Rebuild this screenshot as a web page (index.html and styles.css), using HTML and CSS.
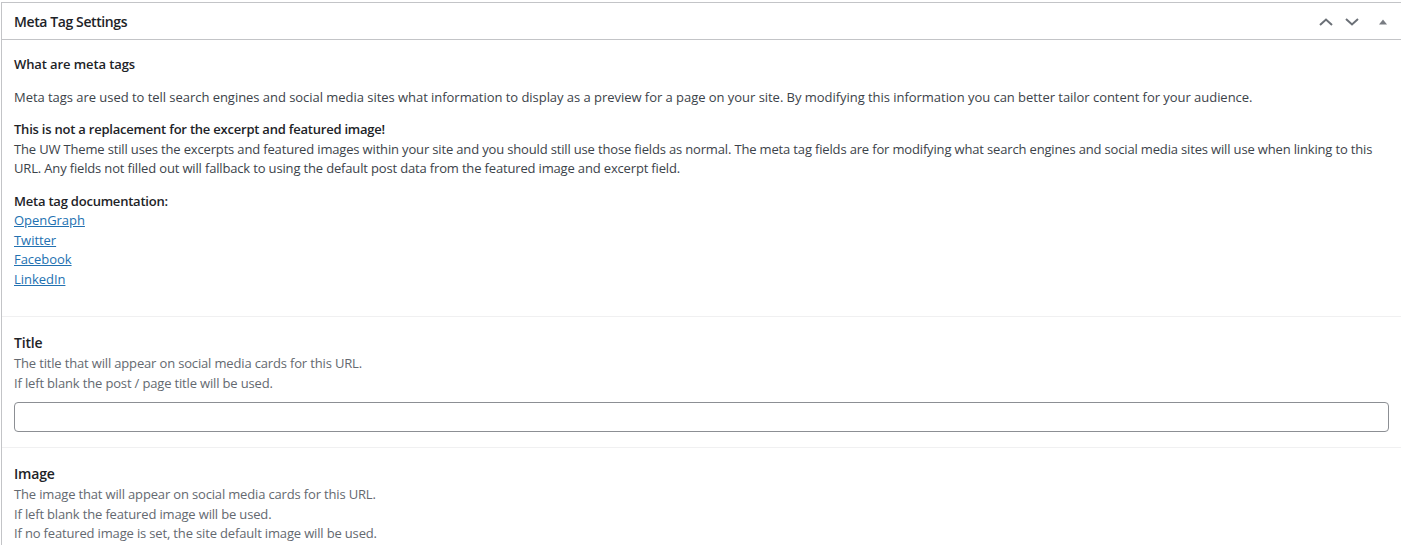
FILE: index.html
```html
<!DOCTYPE html>
<html lang="en">
<head>
    <meta charset="UTF-8">
    <title>Meta Tag Settings</title>
    <link rel="stylesheet" href="styles.css">
</head>
<body>
    <div class="postbox">
        <div class="postbox-header">
            <h2 class="hndle">Meta Tag Settings</h2>
            <div class="handle-actions">
                <button class="handle-btn" aria-label="Move up">
                    <svg width="14" height="10" viewBox="0 0 14 10"><path d="M1 8 L7 2.5 L13 8" fill="none" stroke="#6b7077" stroke-width="2"/></svg>
                </button>
                <button class="handle-btn" aria-label="Move down">
                    <svg width="14" height="10" viewBox="0 0 14 10"><path d="M1 2 L7 7.5 L13 2" fill="none" stroke="#6b7077" stroke-width="2"/></svg>
                </button>
                <button class="handle-btn toggle" aria-label="Toggle panel">
                    <svg width="10" height="8" viewBox="0 0 10 8"><path d="M1 6.5 L5 1.5 L9 6.5 Z" fill="#787c82"/></svg>
                </button>
            </div>
        </div>

        <div class="section">
            <h4>What are meta tags</h4>
            <p>Meta tags are used to tell search engines and social media sites what information to display as a preview for a page on your site. By modifying this information you can better tailor content for your audience.</p>
            <p><span class="strong">This is not a replacement for the excerpt and featured image!</span><br>
            <span class="note">The UW Theme still uses the excerpts and featured images within your site and you should still use those fields as normal. The meta tag fields are for modifying what search engines and social media sites will use when linking to this URL. Any fields not filled out will fallback to using the default post data from the featured image and excerpt field.</span></p>
            <p><span class="strong">Meta tag documentation:</span><br>
            <a href="#">OpenGraph</a><br>
            <a href="#">Twitter</a><br>
            <a href="#">Facebook</a><br>
            <a href="#">LinkedIn</a></p>
        </div>

        <div class="section field">
            <label class="field-label" for="metaTitle">Title</label>
            <p class="description">The title that will appear on social media cards for this URL.<br>If left blank the post / page title will be used.</p>
            <input type="text" id="metaTitle" class="field-input">
        </div>

        <div class="section field">
            <label class="field-label">Image</label>
            <p class="description">The image that will appear on social media cards for this URL.<br>If left blank the featured image will be used.<br>If no featured image is set, the site default image will be used.</p>
        </div>
    </div>
</body>
</html>
```

FILE: styles.css
```css
body {
    margin: 0;
    background: #fff;
    font-family: "Open Sans", "Noto Sans", sans-serif;
    font-size: 13px;
    line-height: 1.5;
    color: #3c434a;
    letter-spacing: -0.04px;
    overflow: hidden;
}

.postbox {
    margin: 2px 0 0 1px;
    width: 1399px;
    border: 1px solid #c3c4c7;
    border-right: 0;
    border-bottom: 0;
    background: #fff;
}

.postbox-header {
    display: flex;
    align-items: center;
    justify-content: space-between;
    height: 34px;
    padding-top: 2px;
    border-bottom: 1px solid #c3c4c7;
}

.hndle {
    margin: 0;
    padding: 0 12px;
    font-size: 14px;
    font-weight: 600;
    color: #1d2327;
    line-height: 1.4;
    letter-spacing: -0.4px;
}

.handle-actions {
    display: flex;
    align-items: center;
    padding-right: 0;
}

.handle-btn {
    width: 26px;
    height: 34px;
    padding: 0;
    border: none;
    background: none;
    display: flex;
    align-items: center;
    justify-content: center;
    cursor: pointer;
}

.handle-btn.toggle {
    width: 36px;
}

.section {
    padding: 15px 12px 14px;
    border-bottom: 1px solid #f0f0f1;
}

.section h4 {
    margin: 0 0 13px;
    font-size: 13px;
    font-weight: 600;
    color: #1d2327;
    letter-spacing: -0.1px;
}

.section p {
    margin: 0 0 13px;
}

.strong {
    font-weight: 600;
    color: #1d2327;
    letter-spacing: -0.22px;
}

.note {
    letter-spacing: -0.16px;
}

a {
    color: #2271b1;
}

.field {
    padding-bottom: 15px;
}

.field-label {
    display: block;
    font-size: 14px;
    font-weight: 600;
    color: #1d2327;
    margin-bottom: 1px;
    letter-spacing: -0.2px;
}

.section p.description {
    margin: 0 0 9px;
    color: #646970;
    letter-spacing: -0.16px;
}

.field-input {
    display: block;
    box-sizing: border-box;
    width: 100%;
    height: 30px;
    margin: 0;
    border: 1px solid #8c8f94;
    border-radius: 4px;
    font: inherit;
    padding: 0 8px;
}
```
